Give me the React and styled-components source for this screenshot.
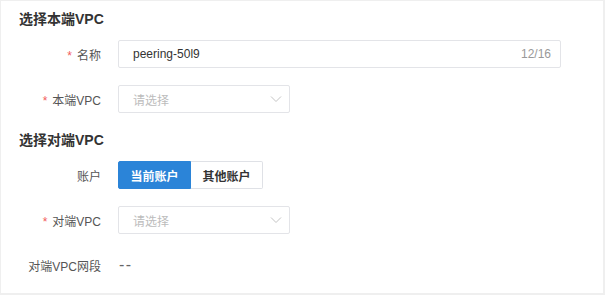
import styled, { createGlobalStyle } from "styled-components";

const GlobalStyle = createGlobalStyle`
  html, body {
    margin: 0;
    padding: 0;
    background: #efefef;
  }
  body {
    font-family: "Liberation Sans", "Noto Sans CJK SC", sans-serif;
  }
`;

const Panel = styled.div`
  box-sizing: border-box;
  width: 602px;
  height: 292px;
  margin: 1px 0 0 1px;
  padding: 8px 18px 0;
  background: #fff;
`;

const SectionTitle = styled.h3`
  margin: ${(p) => (p.$first ? "0 0 11px" : "17px 0 11px")};
  height: 20px;
  line-height: 20px;
  font-size: 14px;
  font-weight: bold;
  color: #333;
`;

const Row = styled.div`
  display: flex;
  align-items: center;
  height: 28px;
  gap: 17px;
  & + & {
    margin-top: 17px;
  }
`;

const Label = styled.div`
  width: 82px;
  flex-shrink: 0;
  text-align: right;
  font-size: 12px;
  color: #555;
`;

const Star = styled.span`
  color: #f25c5c;
  margin-right: 5px;
`;

const Field = styled.div`
  box-sizing: border-box;
  display: flex;
  align-items: center;
  justify-content: space-between;
  width: ${(p) => p.$width}px;
  height: 28px;
  padding: 0 ${(p) => (p.$select ? 7 : 9)}px 0 14px;
  border: 1px solid #e3e4e8;
  border-radius: 2px;
  font-size: 12px;
  color: ${(p) => (p.$placeholder ? "#bcbcbc" : "#333")};
`;

const Counter = styled.span`
  color: #999;
  font-size: 12px;
`;

const ButtonGroup = styled.div`
  display: flex;
  height: 28px;
`;

const GroupButton = styled.button`
  box-sizing: border-box;
  width: ${(p) => (p.$active ? 73 : 72)}px;
  height: 28px;
  padding: 0;
  border: 1px solid ${(p) => (p.$active ? "#2b84d8" : "#dfe1e6")};
  border-left-width: ${(p) => (p.$active ? 1 : 0)}px;
  border-radius: ${(p) => (p.$active ? "2px 0 0 2px" : "0 2px 2px 0")};
  background: ${(p) => (p.$active ? "#2b84d8" : "#fff")};
  color: ${(p) => (p.$active ? "#fff" : "#333")};
  font-family: inherit;
  font-size: 12px;
  font-weight: bold;
`;

const Value = styled.span`
  font-size: 16px;
  letter-spacing: 1.5px;
  color: #666;
  padding-left: 1px;
`;

const Chevron = () => (
  <svg width="12" height="8" viewBox="0 0 12 8">
    <polyline points="1,1.5 6,6.5 11,1.5" fill="none" stroke="#c4c4c4" strokeWidth="1" />
  </svg>
);

export default function App() {
  return (
    <>
      <GlobalStyle />
      <Panel>
        <SectionTitle $first>选择本端VPC</SectionTitle>
        <Row>
          <Label>
            <Star>*</Star>名称
          </Label>
          <Field $width={443}>
            peering-50l9
            <Counter>12/16</Counter>
          </Field>
        </Row>
        <Row>
          <Label>
            <Star>*</Star>本端VPC
          </Label>
          <Field $width={172} $select $placeholder>
            请选择
            <Chevron />
          </Field>
        </Row>
        <SectionTitle>选择对端VPC</SectionTitle>
        <Row>
          <Label>账户</Label>
          <ButtonGroup>
            <GroupButton $active>当前账户</GroupButton>
            <GroupButton>其他账户</GroupButton>
          </ButtonGroup>
        </Row>
        <Row>
          <Label>
            <Star>*</Star>对端VPC
          </Label>
          <Field $width={172} $select $placeholder>
            请选择
            <Chevron />
          </Field>
        </Row>
        <Row>
          <Label>对端VPC网段</Label>
          <Value>--</Value>
        </Row>
      </Panel>
    </>
  );
}
